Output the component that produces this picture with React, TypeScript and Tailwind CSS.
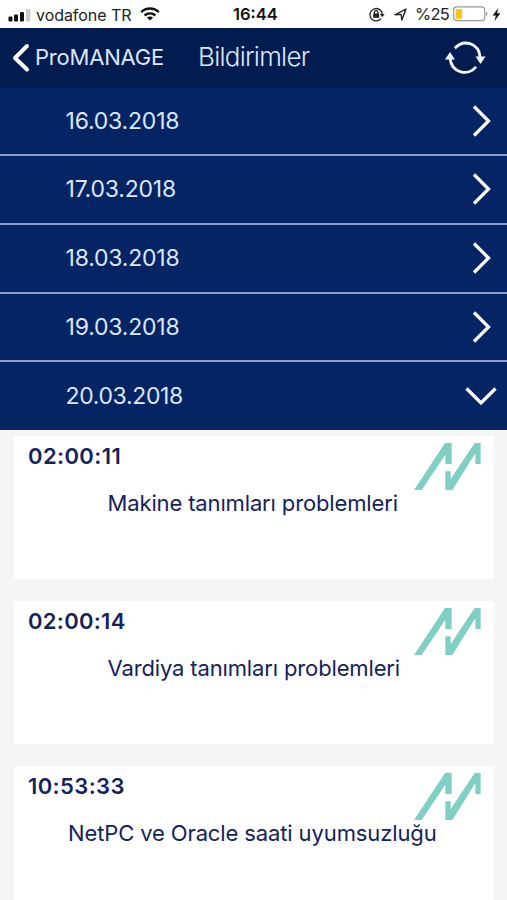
import React from 'react';

interface Notification {
  time: string;
  message: string;
  timeClass: string;
  messageClass: string;
}

const dates = [
  { label: '16.03.2018', className: 'tracking-[-0.2px]' },
  { label: '17.03.2018', className: 'tracking-[-0.2px]' },
  { label: '18.03.2018', className: 'tracking-[-0.2px]' },
  { label: '19.03.2018', className: 'tracking-[-0.2px]' },
  { label: '20.03.2018', className: 'tracking-[-0.35px]' },
];

const notifications: Notification[] = [
  {
    time: '02:00:11',
    message: 'Makine tanımları problemleri',
    timeClass: 'tracking-[0.4px]',
    messageClass: 'pl-[94px] tracking-[-0.14px]',
  },
  {
    time: '02:00:14',
    message: 'Vardiya tanımları problemleri',
    timeClass: 'tracking-[0.3px]',
    messageClass: 'pl-[94px] tracking-[-0.14px]',
  },
  {
    time: '10:53:33',
    message: 'NetPC ve Oracle saati uyumsuzluğu',
    timeClass: 'tracking-[0.4px]',
    messageClass: 'pl-[54.5px] tracking-[-0.12px]',
  },
];

const StatusBar: React.FC = () => (
  <div className="flex h-7 shrink-0 items-center bg-white text-[17px] text-[#222]">
    <svg className="ml-2 mt-[2px] h-[13px] w-[23px]" viewBox="0 0 23 13">
      <rect x="0.5" y="7.5" width="4" height="5" rx="1" fill="#111" />
      <rect x="6" y="5.5" width="4" height="7" rx="1" fill="#111" />
      <rect x="12" y="3" width="4" height="9.5" rx="1" fill="#111" />
      <rect x="18" y="0" width="4.5" height="12.5" rx="1" fill="#ccc" />
    </svg>
    <span className="ml-[5px] w-[104px] whitespace-nowrap pt-[2px] text-[16px] tracking-[-0.05px]">vodafone TR</span>
    <svg className="h-[14px] w-[20px]" viewBox="0 0 20 14" fill="none" stroke="#111" strokeWidth="2.4">
      <path d="M1.2 5.2C6.2 0.3 13.8 0.3 18.8 5.2" />
      <path d="M4.6 8.5C7.7 5.6 12.3 5.6 15.4 8.5" />
      <path d="M10 13.6L6.9 10.6C8.7 9 11.3 9 13.1 10.6Z" fill="#111" stroke="none" />
    </svg>
    <span className="ml-[73px] w-[136px] whitespace-nowrap pt-[1px] text-[16.5px] font-semibold text-[#111]">16:44</span>
    <svg className="h-[15px] w-[16px]" viewBox="0 0 16 15" fill="none" stroke="#222">
      <path d="M12 11.6A6.2 6.2 0 1 1 13.3 7" strokeWidth="1.3" />
      <path d="M10.9 7H15.6L13.3 10.2Z" fill="#222" stroke="none" />
      <rect x="4.2" y="6.6" width="6" height="4.2" rx="0.5" fill="#222" stroke="none" />
      <path d="M5.4 7V5.4A1.8 1.8 0 0 1 9 5.4V7" strokeWidth="1.2" />
    </svg>
    <svg className="ml-[9px] h-[13px] w-[13px]" viewBox="0 0 13 13">
      <path d="M1 6.8L12 1L7.8 12L7.2 6.4Z" fill="none" stroke="#222" strokeWidth="1.4" strokeLinejoin="round" />
    </svg>
    <span className="ml-[8px] w-[37.5px] whitespace-nowrap pt-[1px] text-[16.5px] tracking-[-0.7px]">%25</span>
    <svg className="h-[16px] w-[36px]" viewBox="0 0 36 16">
      <rect x="0.7" y="0.9" width="31" height="13.8" rx="3" fill="#fff" stroke="#999" strokeWidth="1.2" />
      <rect x="2.7" y="3" width="6.5" height="9.7" rx="0.8" fill="#f5c518" />
      <path d="M33 5.6C34.8 6.3 34.8 9.3 33 10Z" fill="#999" />
    </svg>
    <svg className="ml-[3px] h-[13px] w-[9px]" viewBox="0 0 8 12">
      <path d="M5.7 0L0.4 6.9H3.4L2.2 12L7.6 4.8H4.5Z" fill="#111" />
    </svg>
  </div>
);

const NavBar: React.FC = () => (
  <div className="flex h-[60px] shrink-0 items-center bg-[#031c50] text-[#dce7fb]">
    <svg className="ml-[12px] h-[30px] w-[18px]" viewBox="0 0 18 30" fill="none" stroke="#fff" strokeWidth="4" strokeLinecap="round" strokeLinejoin="round">
      <path d="M15 3L3 15L15 26.5" />
    </svg>
    <span className="ml-[5px] w-[163px] whitespace-nowrap pb-[2px] text-[22px] tracking-[-0.2px]">ProMANAGE</span>
    <span className="w-[246px] whitespace-nowrap pb-[4px] text-[26px] font-light tracking-[-0.75px]">Bildirimler</span>
    <svg className="h-[34px] w-[42px]" viewBox="0 0 42 34" fill="none" stroke="#f1f6ff" strokeWidth="2.8">
      <path d="M10.8 7.3C19 -1.9 34.8 1 36.3 17" />
      <path d="M32 25.8C24.5 35.4 7.5 32.5 6 17" />
      <path d="M31.5 15.5H41.5L36.5 23Z" fill="#f1f6ff" stroke="none" />
      <path d="M1 18.5H11L6 11Z" fill="#f1f6ff" stroke="none" />
    </svg>
  </div>
);

const Chevron: React.FC<{ open: boolean }> = ({ open }) =>
  open ? (
    <svg className="mr-[10px] h-[20px] w-[32px]" viewBox="0 0 32 20" fill="none" stroke="#fff" strokeWidth="3.3">
      <path d="M1.5 2.5L16 17L30.5 2.5" />
    </svg>
  ) : (
    <svg className="mr-[16px] h-[32px] w-[19px]" viewBox="0 0 19 32" fill="none" stroke="#fff" strokeWidth="3.3">
      <path d="M2 1.5L16.5 16L2 30.5" />
    </svg>
  );

const Logo: React.FC = () => (
  <svg className="mt-[1px] h-[47px] w-[67px]" viewBox="40 219 201 141" fill="#80cfc4">
    <path d="M40 360H63L134 254V282H153V219H133Z" />
    <path d="M134 304H150V327L222 219H240V282H224V250L155 360H134Z" />
  </svg>
);

const NotificationCard: React.FC<Notification> = ({ time, message, timeClass, messageClass }) => (
  <div className="h-[143px] shrink-0 bg-white text-[#14235a]">
    <div className="flex h-[53px] items-start justify-between pl-[14.5px] pr-[13px] pt-[6px]">
      <span className={`text-[22px] font-semibold leading-[28px] ${timeClass}`}>{time}</span>
      <Logo />
    </div>
    <p className={`whitespace-nowrap text-[22px] leading-[28px] ${messageClass}`}>{message}</p>
  </div>
);

const App: React.FC = () => {
  return (
    <div className="flex h-[900px] w-[507px] flex-col overflow-hidden bg-[#f5f5f5] font-['Inter',sans-serif]">
      <StatusBar />
      <NavBar />
      <div className="flex h-[342px] shrink-0 flex-col divide-y-2 divide-[#8b9dcb] bg-[#052464]">
        {dates.map(({ label, className }, index) => (
          <div
            key={label}
            className="flex h-[68.75px] shrink-0 items-center justify-between pl-[65.5px] text-[23px] text-[#dce7fb] first:h-[68px] last:h-auto last:flex-1"
          >
            <span className={className}>{label}</span>
            <Chevron open={index === dates.length - 1} />
          </div>
        ))}
      </div>
      <div className="flex flex-col gap-[22px] px-[13.5px] pt-[6px]">
        {notifications.map((item) => (
          <NotificationCard key={item.time} {...item} />
        ))}
      </div>
    </div>
  );
};

export default App;
